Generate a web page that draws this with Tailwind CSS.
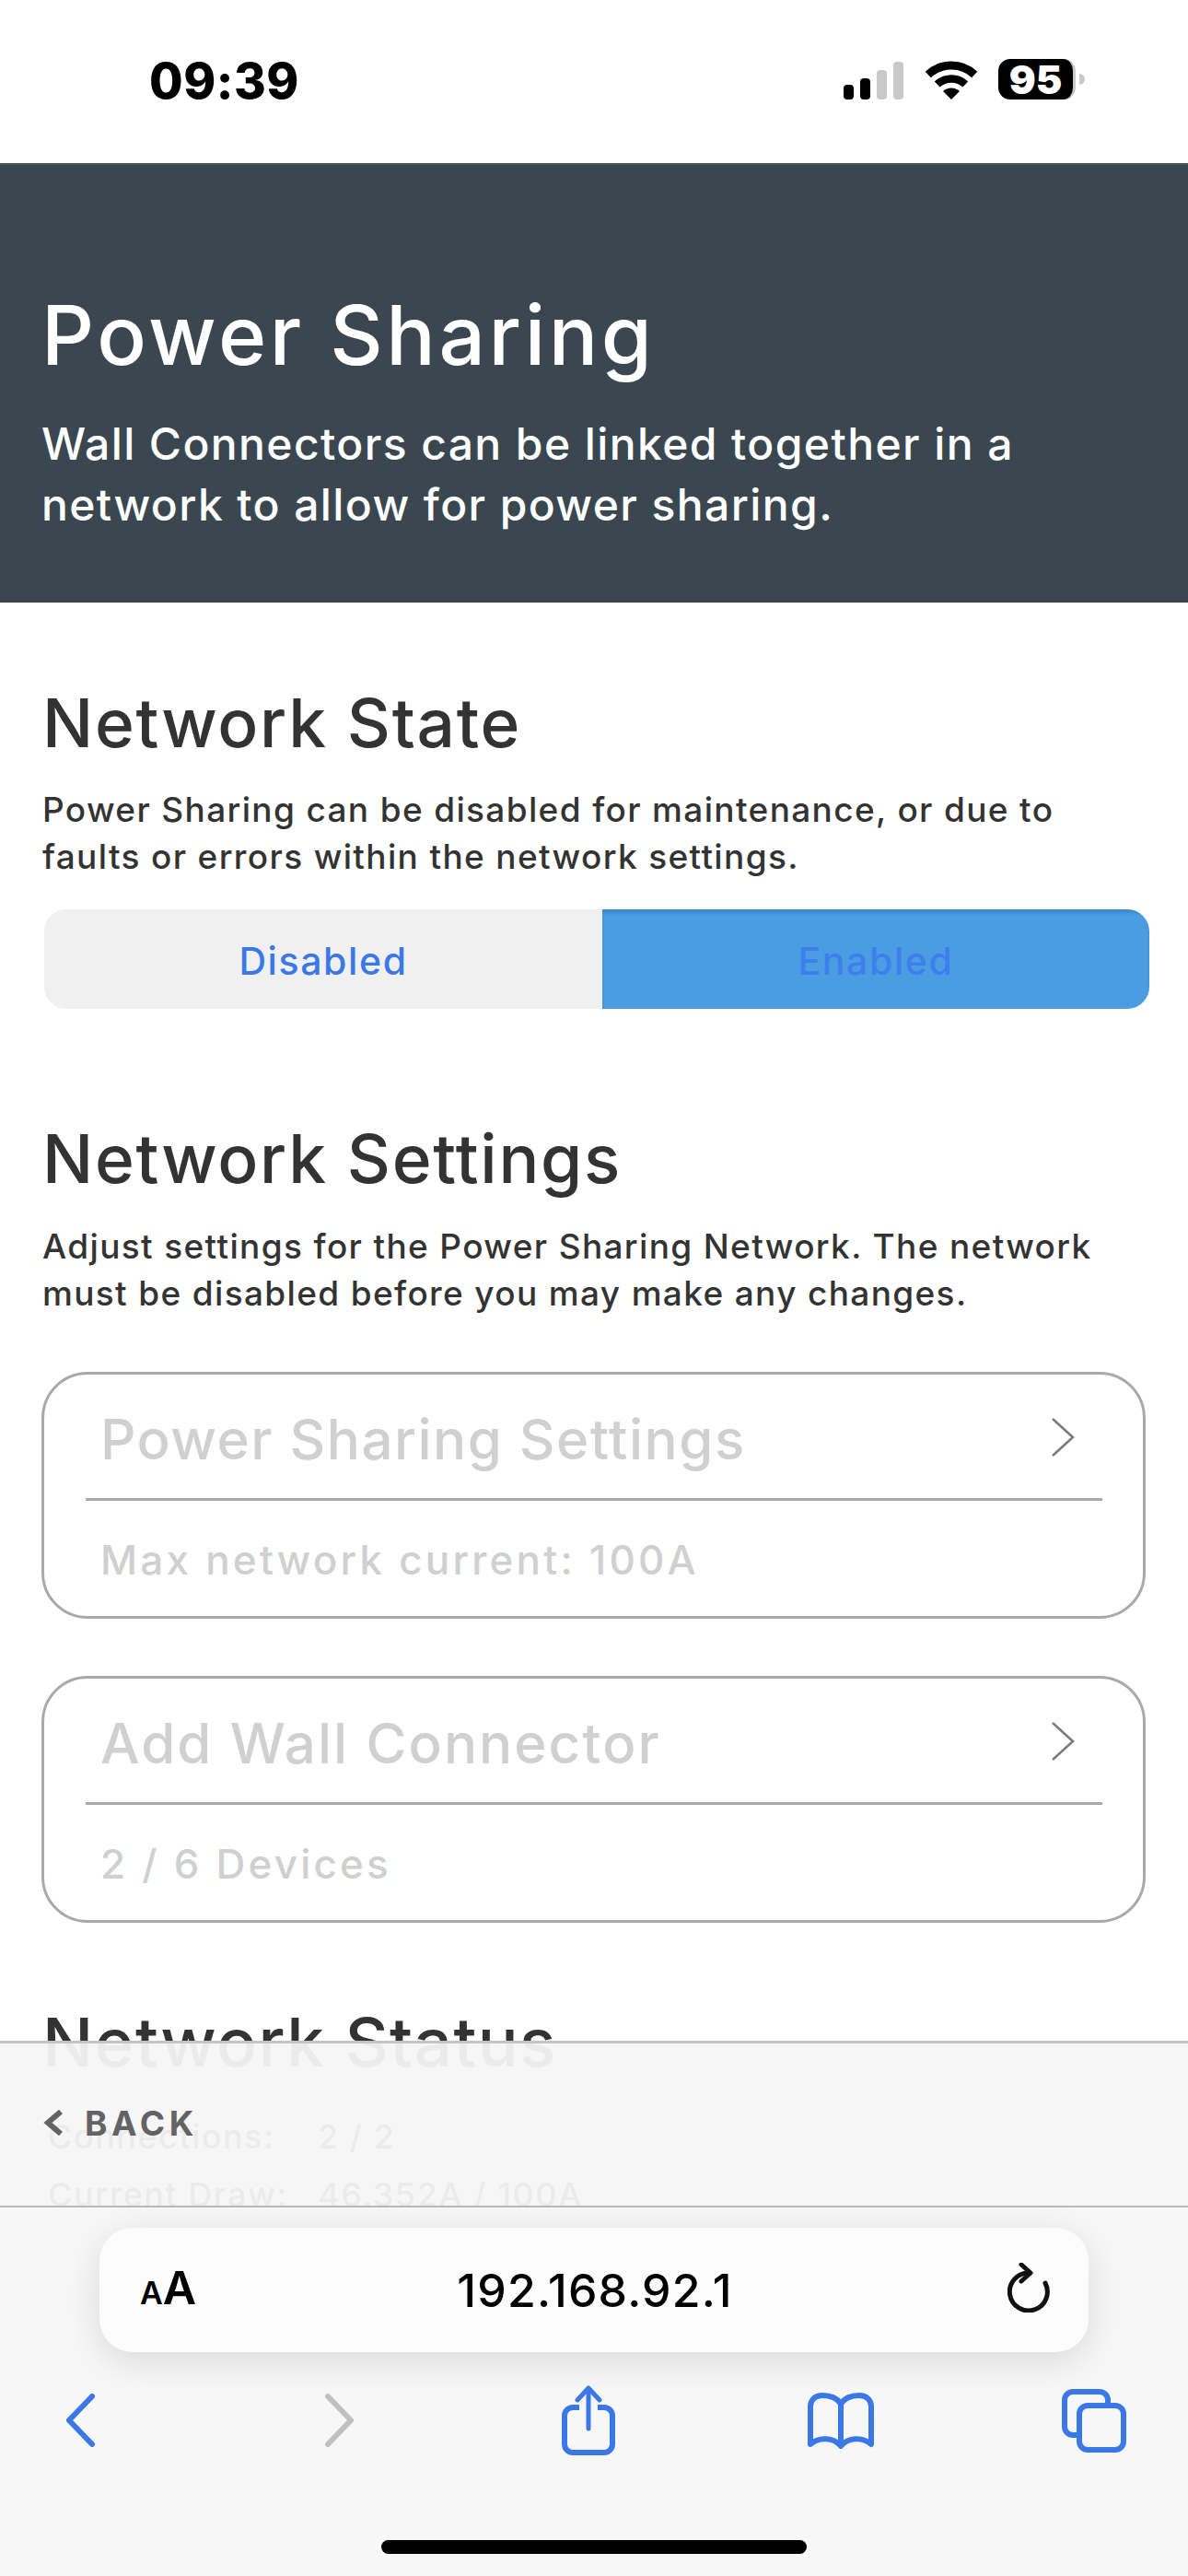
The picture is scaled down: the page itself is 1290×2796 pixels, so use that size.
<!DOCTYPE html>
<html lang="en">
  <head>
    <meta charset="UTF-8" />
    <title>Power Sharing</title>
    <script src="https://cdn.jsdelivr.net/npm/@tailwindcss/browser@4"></script>
  </head>
  <body>
    <div class="relative w-[1290px] h-[2796px] overflow-hidden bg-white font-[Inter,sans-serif]">
      <!-- status bar -->
      <div class="h-[177px] flex items-start">
        <div class="ml-[162px] mt-[54px] text-[53px] leading-[68px] font-extrabold text-black tracking-[0.5px]">09:39</div>
        <div class="ml-auto mt-[64px] flex items-end h-[44px]">
          <div class="w-[11px] h-[16px] rounded-[4px] bg-black"></div>
          <div class="ml-[7px] w-[11px] h-[23px] rounded-[4px] bg-black"></div>
          <div class="ml-[7px] w-[11px] h-[32px] rounded-[4px] bg-[#c9c9c9]"></div>
          <div class="ml-[7px] w-[11px] h-[41px] rounded-[4px] bg-[#c9c9c9]"></div>
          <svg class="ml-[23px]" width="58" height="42" viewBox="0 0 58 42">
            <path d="M3.8 15A37 37 0 0 1 54.2 15" fill="none" stroke="#000" stroke-width="9" />
            <path d="M13.7 25.5A22.5 22.5 0 0 1 44.3 25.5" fill="none" stroke="#000" stroke-width="8.5" />
            <path d="M29 42L20 33A13 13 0 0 1 38 33Z" fill="#000" />
          </svg>
          <div class="ml-[22px] w-[84px] h-[44px] rounded-[13px] bg-black border-r-[3px] border-[#c9c9c9] flex items-center justify-center text-white font-black text-[43px] leading-[44px]">95</div>
          <div class="ml-[4px] mb-[16px] w-[6px] h-[12px] rounded-r-full bg-[#c9c9c9]"></div>
          <div class="w-[112px]"></div>
        </div>
      </div>

      <!-- page header -->
      <header class="h-[477px] bg-[#3b4750] border-t-[2px] border-[#48535c] pl-[45px] pt-[135px]">
        <h1 class="text-[89px] leading-[100px] font-medium text-white tracking-[3.6px]">Power Sharing</h1>
        <p class="mt-[35px] text-[48px] leading-[66px] font-medium text-white tracking-[1.4px]">Wall Connectors can be linked together in a<br />network to allow for power sharing.</p>
      </header>

      <main class="pl-[46px] pt-[91px] text-[#333333] font-medium">
        <h2 class="text-[73px] leading-[80px] tracking-[1.7px]">Network State</h2>
        <p class="mt-[28px] text-[37px] leading-[51px] tracking-[1.35px]">Power Sharing can be disabled for maintenance, or due to<br />faults or errors within the network settings.</p>
        <div class="mt-[32px] ml-[2px] w-[1200px] h-[108px] flex rounded-[24px] overflow-hidden text-[41px] font-medium tracking-[1.6px]">
          <div class="w-[606px] pt-[6px] bg-[#f0f0f0] text-[#3b78e7] flex items-center justify-center">Disabled</div>
          <div class="flex-1 pt-[6px] bg-[#4a9de0] text-[#3f7eee] shadow-[inset_0_4px_3px_rgba(40,100,170,0.35)] flex items-center justify-center">Enabled</div>
        </div>

        <h2 class="mt-[123px] text-[73px] leading-[80px] tracking-[1.7px]">Network Settings</h2>
        <p class="mt-[29px] text-[37px] leading-[51px] tracking-[1.35px]">Adjust settings for the Power Sharing Network. The network<br />must be disabled before you may make any changes.</p>

        <div class="mt-[60px] -ml-px w-[1199px] h-[268px] rounded-[50px] border-[3px] border-[#a9a9a9] text-[#d0d0d0]">
          <div class="ml-[45px] mr-[44px] h-[137px] border-b-[3px] border-[#a9a9a9] flex items-start justify-between pl-[16px] pr-[30px] pt-[35px]">
            <div class="text-[60px] leading-[70px] tracking-[1.5px]">Power Sharing Settings</div>
            <svg class="mt-[12px]" width="26" height="42" viewBox="0 0 26 42"><path d="M2 1L24 21L2 41" fill="none" stroke="#7a7a7a" stroke-width="2.5" /></svg>
          </div>
          <div class="mt-[34px] ml-[61px] text-[44px] leading-[60px] tracking-[3.2px]">Max network current: 100A</div>
        </div>

        <div class="mt-[62px] -ml-px w-[1199px] h-[268px] rounded-[50px] border-[3px] border-[#a9a9a9] text-[#d0d0d0]">
          <div class="ml-[45px] mr-[44px] h-[137px] border-b-[3px] border-[#a9a9a9] flex items-start justify-between pl-[16px] pr-[30px] pt-[35px]">
            <div class="text-[60px] leading-[70px] tracking-[2.1px]">Add Wall Connector</div>
            <svg class="mt-[12px]" width="26" height="42" viewBox="0 0 26 42"><path d="M2 1L24 21L2 41" fill="none" stroke="#7a7a7a" stroke-width="2.5" /></svg>
          </div>
          <div class="mt-[34px] ml-[61px] text-[44px] leading-[60px] tracking-[3.2px]">2 / 6 Devices</div>
        </div>

        <h2 class="mt-[90px] text-[73px] leading-[80px] tracking-[1.4px]">Network Status</h2>
        <div class="mt-[31px] pl-[6px] text-[36px] leading-[63px] tracking-[1.5px]">
          <div class="flex"><span class="w-[293px]">Connections:</span><span>2 / 2</span></div>
          <div class="flex"><span class="w-[293px]">Current Draw:</span><span>46.352A / 100A</span></div>
        </div>
      </main>

      <!-- back bar + safari toolbar sit over the page -->
      <div class="absolute left-0 right-0 bottom-0 h-[581px] flex flex-col">
        <div class="h-[181px] bg-[#f6f6f6]/95 border-t-[3px] border-b-[2px] border-t-[#c4c4c4] border-b-[#b9b9b9] pl-[47px] pt-[65px] flex items-start">
          <svg class="mt-[7px]" width="22" height="28" viewBox="0 0 22 28"><path d="M19 2L5 14L19 26" fill="none" stroke="#636363" stroke-width="6" /></svg>
          <span class="ml-[23px] text-[37px] leading-[44px] font-bold text-[#636363] tracking-[4.6px]">BACK</span>
        </div>
        <div class="flex-1 bg-[#f7f7f7]">
          <div class="mt-[22px] ml-[108px] w-[1074px] h-[135px] rounded-[36px] bg-[#fcfcfc] shadow-[0_10px_40px_rgba(0,0,0,0.12)] flex items-center pl-[44px] pr-[42px] text-black">
            <div class="flex-1 flex items-baseline font-semibold">
              <span class="text-[34px] leading-[40px]">A</span><span class="text-[50px] leading-[40px]">A</span>
            </div>
            <div class="text-[50px] leading-[60px] font-medium tracking-[1.2px]">192.168.92.1</div>
            <div class="flex-1 flex justify-end">
              <svg class="mb-[6px]" width="46" height="54" viewBox="0 0 46 54">
                <path d="M23 11A20.5 20.5 0 1 0 41 22" fill="none" stroke="#111" stroke-width="5" stroke-linecap="round" />
                <path d="M15 2L25 11L15 20" fill="none" stroke="#111" stroke-width="5" stroke-linecap="round" stroke-linejoin="round" />
              </svg>
            </div>
          </div>
          <div class="mt-[36px] h-[76px] flex items-center">
            <svg class="ml-[70px]" width="34" height="58" viewBox="0 0 34 58"><path d="M30 3L5 29L30 55" fill="none" stroke="#3b78e7" stroke-width="6" stroke-linecap="round" stroke-linejoin="round" /></svg>
            <svg class="ml-[248px]" width="34" height="58" viewBox="0 0 34 58"><path d="M4 3L29 29L4 55" fill="none" stroke="#c0c0c0" stroke-width="6" stroke-linecap="round" stroke-linejoin="round" /></svg>
            <svg class="ml-[224px]" width="58" height="76" viewBox="0 0 58 76" fill="none" stroke="#3b78e7">
              <path d="M19 24H12A9 9 0 0 0 3 33V64A9 9 0 0 0 12 73H46A9 9 0 0 0 55 64V33A9 9 0 0 0 46 24H39" stroke-width="6" />
              <path d="M29 4V47" stroke-width="5" stroke-linecap="round" />
              <path d="M17 16L29 3L41 16" stroke-width="5" stroke-linecap="round" stroke-linejoin="round" />
            </svg>
            <svg class="ml-[209px]" width="72" height="61" viewBox="0 0 72 61" fill="none" stroke="#3b78e7" stroke-width="6" stroke-linejoin="round">
              <path d="M3 56C12 48 28 48 36 58C44 48 60 48 69 56V15C69 8 64 3 56 3C48 3 40 6 36 12C32 6 24 3 16 3C8 3 3 8 3 15Z" />
              <path d="M36 12V57" />
            </svg>
            <svg class="ml-[204px]" width="70" height="69" viewBox="0 0 70 69" fill="none" stroke="#3b78e7" stroke-width="6">
              <path d="M16 50H12A9 9 0 0 1 3 41V12A9 9 0 0 1 12 3H41A9 9 0 0 1 50 12V16" />
              <rect x="19" y="18" width="48" height="48" rx="9" />
            </svg>
          </div>
          <div class="mt-[92px] mx-auto w-[462px] h-[15px] rounded-full bg-black"></div>
        </div>
      </div>
    </div>
  </body>
</html>
